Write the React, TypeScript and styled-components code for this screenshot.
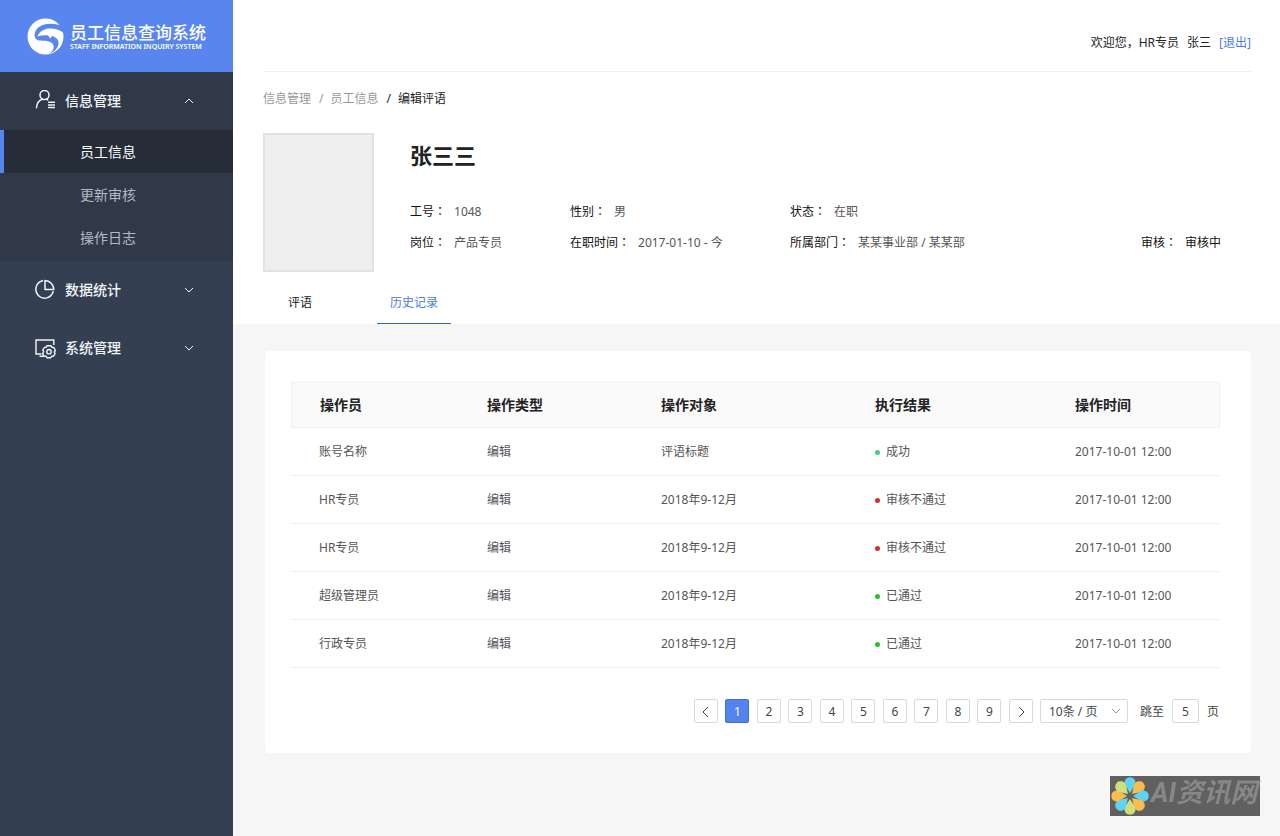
import React from "react";
import styled, { createGlobalStyle, css } from "styled-components";

const GlobalStyle = createGlobalStyle`
  *, *::before, *::after { box-sizing: border-box; }
  html, body { margin: 0; padding: 0; }
  body {
    background: #f6f6f6;
    color: #333;
    font-family: "Noto Sans", "Noto Sans CJK SC", sans-serif;
    font-size: 12px;
    line-height: 20px;
  }
  button, input, select { font: inherit; color: inherit; }
  h1, p, ul, ol, dl, dd { margin: 0; padding: 0; }
  ul, ol { list-style: none; }
  a { color: inherit; text-decoration: none; }
`;

const Page = styled.div`
  display: flex;
  min-height: 100vh;
`;

/* ---------- sidebar ---------- */

const Sidebar = styled.aside`
  flex: 0 0 233px;
  background: #343f51;
  color: #fff;
`;

const Brand = styled.a`
  display: flex;
  align-items: center;
  gap: 6px;
  height: 72px;
  padding-left: 27px;
  background: #5986ee;
`;

const BrandText = styled.span`
  display: flex;
  flex-direction: column;
  padding-top: 2px;
  white-space: nowrap;
`;

const BrandName = styled.span`
  font-size: 17px;
  font-weight: 500;
  line-height: 20px;
`;

const BrandCaption = styled.span`
  font-size: 7px;
  font-weight: 600;
  line-height: 8px;
`;

const Group = styled.section<{ $open?: boolean }>`
  background: ${(p) => (p.$open ? "#2f3948" : "transparent")};
  padding-bottom: ${(p) => (p.$open ? "2px" : "0")};
`;

const GroupButton = styled.button`
  display: flex;
  align-items: center;
  width: 100%;
  height: 58px;
  padding: 0 39px 0 34px;
  border: 0;
  background: none;
  color: #f1f4f8;
  font-size: 14px;
  font-weight: 500;
  text-align: left;
  cursor: pointer;
`;

const GroupLabel = styled.span`
  flex: 1;
  margin-left: 9px;
`;

const SubLink = styled.a<{ $active?: boolean }>`
  display: flex;
  align-items: center;
  height: 43px;
  padding-left: 76px;
  border-left: 4px solid transparent;
  color: #b4bac3;
  font-size: 14px;
  ${(p) =>
    p.$active &&
    css`
      border-left-color: #5986ee;
      background: #262d38;
      color: #fff;
    `}
`;

/* ---------- main column ---------- */

const Main = styled.main`
  flex: 1;
  min-width: 0;
`;

const Head = styled.header`
  padding: 0 29px 0 30px;
  background: #fff;
`;

const TopBar = styled.div`
  display: flex;
  justify-content: flex-end;
  align-items: center;
  gap: 8px;
  height: 72px;
  padding: 14px 0 0;
  border-bottom: 1px solid #f0f0f0;
  color: #222;
`;

const ExitLink = styled.a`
  color: #4c7bea;
`;

const Crumbs = styled.ol`
  display: flex;
  padding-top: 17px;
  color: #999;

  li + li::before {
    content: "/";
    margin: 0 7px 0 8px;
  }
  li:last-child {
    color: #222;
  }
`;

const Profile = styled.section`
  display: flex;
  gap: 36px;
  padding-top: 24px;
`;

const Photo = styled.div`
  width: 111px;
  height: 139px;
  border: 2px solid #e2e2e2;
  background: #eee;
`;

const ProfileBody = styled.div`
  flex: 1;
  padding-top: 7px;
`;

const PersonName = styled.h1`
  color: #222;
  font-size: 22px;
  font-weight: 700;
  line-height: 30px;
`;

const Facts = styled.dl`
  display: grid;
  grid-template-columns: 160px 220px 1fr auto;
  row-gap: 11px;
  padding: 32px 30px 0 0;
`;

const Fact = styled.div<{ $col: number; $strong?: boolean }>`
  display: flex;
  grid-column: ${(p) => p.$col};
  gap: 8px;
  white-space: nowrap;
  dt { color: #111; }
  dd { color: ${(p) => (p.$strong ? "#111" : "#555")}; }
`;

/* the Traditional Chinese face centres the colon in its square */
const Colon = styled.span`
  font-family: "Noto Sans CJK TC", sans-serif;
  line-height: 1;
`;

const Tabs = styled.nav`
  display: flex;
  gap: 40px;
  padding-top: 10px;
`;

const Tab = styled.a<{ $active?: boolean }>`
  width: 74px;
  height: 42px;
  padding-top: 11px;
  border-bottom: 1px solid ${(p) => (p.$active ? "#2f62c8" : "transparent")};
  color: ${(p) => (p.$active ? "#4c7bea" : "#222")};
  text-align: center;
`;

const Card = styled.section`
  margin: 27px 29px 0 32px;
  padding: 31px 31px 30px 26px;
  border-radius: 4px;
  background: #fff;
`;

const Table = styled.table`
  width: 100%;
  border-collapse: separate;
  border-spacing: 0;
  table-layout: fixed;

  th, td {
    padding: 0;
    text-align: left;
    border-bottom: 1px solid #f0f0f0;
  }
  th {
    height: 46px;
    border-top: 1px solid #f0f0f0;
    background: #fafafa;
    color: #222;
    font-size: 14px;
    font-weight: 700;
  }
  td {
    height: 48px;
    padding-top: 1px;
    color: #555;
  }
  th:first-child, td:first-child { padding-left: 28px; }
  th:first-child { border-left: 1px solid #f0f0f0; }
  th:last-child { border-right: 1px solid #f0f0f0; }
`;

const Col = styled.col<{ $share: number }>`
  width: ${(p) => p.$share}%;
`;

const Status = styled.span<{ $color: string }>`
  display: flex;
  align-items: center;
  gap: 6px;

  &::before {
    content: "";
    width: 5px;
    height: 5px;
    border-radius: 50%;
    background: ${(p) => p.$color};
  }
`;

const Pager = styled.nav`
  display: flex;
  justify-content: flex-end;
  align-items: center;
  gap: 7px;
  padding: 31px 1px 0 0;
`;

const Pages = styled.ul`
  display: flex;
  justify-content: space-between;
  width: 339px;
`;

const PageButton = styled.button<{ $active?: boolean }>`
  display: flex;
  align-items: center;
  justify-content: center;
  width: 24px;
  height: 24px;
  padding: 1px 0 0;
  border: 1px solid ${(p) => (p.$active ? "#3f6fdc" : "#d9d9d9")};
  border-radius: 2px;
  background: ${(p) => (p.$active ? "#5383ee" : "#fff")};
  color: ${(p) => (p.$active ? "#fff" : "#444")};
  cursor: pointer;
`;

const SizeBox = styled.label`
  display: flex;
  align-items: center;
  width: 88px;
  height: 24px;
  padding-right: 6px;
  border: 1px solid #d9d9d9;
  border-radius: 2px;
  color: #999;
`;

const SizeSelect = styled.select`
  flex: 1;
  min-width: 0;
  height: 22px;
  padding: 1px 0 0 8px;
  border: 0;
  background: transparent;
  color: #444;
  appearance: none;
`;

const Jump = styled.label`
  display: flex;
  align-items: center;
  gap: 8px;
  padding-left: 5px;
  color: #444;
`;

const JumpText = styled.span`
  padding-top: 1px;
`;

const JumpInput = styled.input`
  width: 27px;
  height: 24px;
  padding: 0;
  border: 1px solid #d9d9d9;
  border-radius: 2px;
  text-align: center;
`;

const Watermark = styled.div`
  position: fixed;
  right: 20px;
  bottom: 20px;
  display: flex;
  align-items: flex-start;
  gap: 2px;
  width: 150px;
  height: 40px;
  padding: 1px 0 0 1px;
  background: #606060;
  color: #878787;
  font-family: Roboto, "Noto Sans CJK SC", sans-serif;
  font-size: 27px;
  font-style: italic;
  font-weight: 700;
  line-height: 32px;
  white-space: nowrap;
`;

/* ---------- drawings ---------- */

const Logo = () => (
  <svg width="37" height="37" viewBox="0 0 37 37" aria-hidden="true">
    <circle cx="18.500" cy="18.500" r="18" fill="#fff" />
    <path
      d="M37 9.500 C31 5 18 4.500 12 9 C8 12 6.500 17 8.500 20.500 C11 24 17 22 22 23.500 C28 25.500 28.500 31 22.500 36 C30 32.500 33.500 26 30.500 21.500 C29 19.500 27 18.500 25 18 L23.500 20.500 L21 17.500 C17.500 16.800 14 17.500 10.500 18.500 C11.500 14.500 16 11 22 10.500 C28 10 33 12 37 15 Z"
      fill="#5986ee"
    />
  </svg>
);

const UserIcon = () => (
  <svg width="22" height="22" viewBox="0 0 22 22" fill="none" stroke="currentColor" strokeWidth="1.500" aria-hidden="true">
    <circle cx="10.500" cy="5" r="4.500" />
    <path d="M2.500 17.800c.2-4.600 2.300-7.300 6-8.500M12.500 9.300l1.200.6" strokeLinecap="round" />
    <path d="M14 12.300h7M14 14.900h7M14 17.500h7" />
  </svg>
);

const PieIcon = () => (
  <svg width="22" height="22" viewBox="0 0 22 22" fill="none" stroke="currentColor" strokeWidth="1.500" aria-hidden="true">
    <path d="M8.500 1.800a8.800 8.800 0 1 0 10.600 11" strokeLinecap="round" />
    <path d="M11 1.500v9h8.800a9 9 0 0 0-8.800-9z" strokeLinejoin="round" />
  </svg>
);

const SystemIcon = () => (
  <svg width="22" height="22" viewBox="0 0 22 22" fill="none" stroke="currentColor" strokeWidth="1.400" aria-hidden="true">
    <path d="M19.800 8V3H2v14h5.500M5.500 19.300h4.500" />
    <path d="M13 8.700h4l.9 1.700 2 .1 1.400 3-1 1.500.8 1.600-1.700 2.600-1.700.1-1 1.400h-3.800l-.9-1.500-2-.1-1.400-2.800 1.100-1.500-1-1.600 1.600-2.700 1.700-.1z" strokeLinejoin="round" />
    <circle cx="15" cy="14.700" r="2.200" />
  </svg>
);

const Chevron = ({ d }: { d: "up" | "down" | "left" | "right" }) => {
  const paths = {
    up: "M1 7l4-4 4 4",
    down: "M1 3l4 4 4-4",
    left: "M7 0L2 5l5 5",
    right: "M3 0l5 5-5 5",
  };
  return (
    <svg width="10" height="10" viewBox="0 0 10 10" fill="none" stroke="currentColor" aria-hidden="true">
      <path d={paths[d]} />
    </svg>
  );
};

const PETALS = ["#5fd3f3", "#fdbb4d", "#5fd3f3", "#fdbb4d", "#cde07a", "#5fd3f3", "#fdbb4d", "#cde07a"];

const Flower = () => (
  <svg width="38" height="38" viewBox="-19 -19 38 38" aria-hidden="true">
    {PETALS.map((color, i) => (
      <path
        key={i}
        d="M0 -3 L-4.800 -10.500 A5.500 5.500 0 1 1 4.800 -10.500 Z"
        fill={color}
        transform={`rotate(${i * 45})`}
      />
    ))}
  </svg>
);

/* ---------- data ---------- */

const COLUMNS = [
  { title: "操作员", weight: 196 },
  { title: "操作类型", weight: 174 },
  { title: "操作对象", weight: 214 },
  { title: "执行结果", weight: 200 },
  { title: "操作时间", weight: 145 },
];
const TOTAL_WEIGHT = COLUMNS.reduce((sum, c) => sum + c.weight, 0);

const ROWS = [
  { who: "账号名称", target: "评语标题", result: "成功", color: "#41cf87" },
  { who: "HR专员", target: "2018年9-12月", result: "审核不通过", color: "#e02b2b" },
  { who: "HR专员", target: "2018年9-12月", result: "审核不通过", color: "#e02b2b" },
  { who: "超级管理员", target: "2018年9-12月", result: "已通过", color: "#1fc42f" },
  { who: "行政专员", target: "2018年9-12月", result: "已通过", color: "#1fc42f" },
];

const FACTS = [
  { col: 1, label: "工号", value: "1048" },
  { col: 2, label: "性别", value: "男" },
  { col: 3, label: "状态", value: "在职" },
  { col: 1, label: "岗位", value: "产品专员" },
  { col: 2, label: "在职时间", value: "2017-01-10 - 今" },
  { col: 3, label: "所属部门", value: "某某事业部 / 某某部" },
  { col: 4, label: "审核", value: "审核中", strong: true },
];

const PAGES = [1, 2, 3, 4, 5, 6, 7, 8, 9];

export default function App() {
  return (
    <>
      <GlobalStyle />
      <Page>
        <Sidebar>
          <Brand href="#">
            <Logo />
            <BrandText>
              <BrandName>员工信息查询系统</BrandName>
              <BrandCaption>STAFF INFORMATION INQUIRY SYSTEM</BrandCaption>
            </BrandText>
          </Brand>
          <Group $open>
            <GroupButton type="button" aria-expanded="true">
              <UserIcon />
              <GroupLabel>信息管理</GroupLabel>
              <Chevron d="up" />
            </GroupButton>
            <ul>
              <li><SubLink href="#" $active>员工信息</SubLink></li>
              <li><SubLink href="#">更新审核</SubLink></li>
              <li><SubLink href="#">操作日志</SubLink></li>
            </ul>
          </Group>
          <Group>
            <GroupButton type="button" aria-expanded="false">
              <PieIcon />
              <GroupLabel>数据统计</GroupLabel>
              <Chevron d="down" />
            </GroupButton>
          </Group>
          <Group>
            <GroupButton type="button" aria-expanded="false">
              <SystemIcon />
              <GroupLabel>系统管理</GroupLabel>
              <Chevron d="down" />
            </GroupButton>
          </Group>
        </Sidebar>

        <Main>
          <Head>
            <TopBar>
              <span>欢迎您，HR专员</span>
              <span>张三</span>
              <ExitLink href="#">[退出]</ExitLink>
            </TopBar>
            <Crumbs>
              <li><a href="#">信息管理</a></li>
              <li><a href="#">员工信息</a></li>
              <li>编辑评语</li>
            </Crumbs>
            <Profile>
              <Photo />
              <ProfileBody>
                <PersonName>张三三</PersonName>
                <Facts>
                  {FACTS.map((f) => (
                    <Fact key={f.label} $col={f.col} $strong={f.strong}>
                      <dt>{f.label}<Colon>：</Colon></dt>
                      <dd>{f.value}</dd>
                    </Fact>
                  ))}
                </Facts>
              </ProfileBody>
            </Profile>
            <Tabs>
              <Tab href="#">评语</Tab>
              <Tab href="#" $active>历史记录</Tab>
            </Tabs>
          </Head>

          <Card>
            <Table>
              <colgroup>
                {COLUMNS.map((c) => (
                  <Col key={c.title} $share={(c.weight / TOTAL_WEIGHT) * 100} />
                ))}
              </colgroup>
              <thead>
                <tr>{COLUMNS.map((c) => <th key={c.title} scope="col">{c.title}</th>)}</tr>
              </thead>
              <tbody>
                {ROWS.map((r, i) => (
                  <tr key={i}>
                    <td>{r.who}</td>
                    <td>编辑</td>
                    <td>{r.target}</td>
                    <td><Status $color={r.color}>{r.result}</Status></td>
                    <td>2017-10-01 12:00</td>
                  </tr>
                ))}
              </tbody>
            </Table>
            <Pager aria-label="分页">
              <Pages>
                <li><PageButton type="button" aria-label="上一页"><Chevron d="left" /></PageButton></li>
                {PAGES.map((n) => (
                  <li key={n}><PageButton type="button" $active={n === 1}>{n}</PageButton></li>
                ))}
                <li><PageButton type="button" aria-label="下一页"><Chevron d="right" /></PageButton></li>
              </Pages>
              <SizeBox>
                <SizeSelect aria-label="每页条数" defaultValue="10">
                  <option value="10">10条 / 页</option>
                </SizeSelect>
                <Chevron d="down" />
              </SizeBox>
              <Jump>
                <JumpText>跳至</JumpText>
                <JumpInput type="text" defaultValue="5" />
                <JumpText>页</JumpText>
              </Jump>
            </Pager>
          </Card>
        </Main>
      </Page>
      <Watermark>
        <Flower />
        <span>AI资讯网</span>
      </Watermark>
    </>
  );
}
